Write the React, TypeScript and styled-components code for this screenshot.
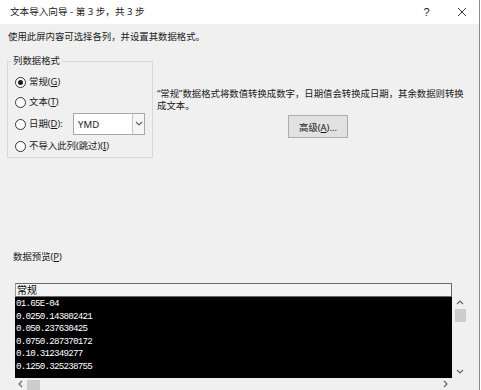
import styled, { createGlobalStyle } from 'styled-components'

const GlobalStyle = createGlobalStyle`
  html, body {
    margin: 0;
    padding: 0;
    background: #fff;
  }
  body {
    font-family: "Noto Sans", "Noto Sans CJK SC", sans-serif;
    color: #1a1a1a;
  }
  * {
    box-sizing: border-box;
  }
`

const Win = styled.div`
  width: 480px;
  height: 390px;
  overflow: hidden;
  display: flex;
  flex-direction: column;
  background: #f0f0f0;
  border-right: 1px solid #8c8c8c;
`

const TitleBar = styled.div`
  flex: 0 0 24px;
  display: flex;
  align-items: center;
  background: #fff;
  padding-left: 10px;
  font-size: 9.6px;
`

const Title = styled.span`
  flex: 1;
  line-height: 14px;
`

const TitleBtn = styled.span`
  width: 35px;
  height: 24px;
  display: flex;
  align-items: center;
  justify-content: center;
  font-family: "Liberation Sans", sans-serif;
  font-size: 11px;
  color: #222;
`

const Body = styled.div`
  flex: 1;
  display: flex;
  flex-direction: column;
  padding-left: 7px;
  font-size: 9.4px;
`

const Intro = styled.div`
  margin: 6px 0 0 1px;
  line-height: 14px;
`

const OptionsRow = styled.div`
  display: flex;
  margin-top: 10px;
`

const Group = styled.fieldset`
  width: 146px;
  margin: 0;
  padding: 4px 7px 0 7px;
  border: 1px solid #d8d8d8;
  min-inline-size: 0;
  height: 104px;
`

const Legend = styled.legend`
  padding: 0 2px;
  margin-left: -4px;
  line-height: 14px;
`

const Option = styled.label<{ $tall?: boolean }>`
  display: flex;
  align-items: center;
  gap: 3px;
  height: ${p => (p.$tall ? 24 : 20)}px;
  white-space: nowrap;
`

const OptionText = styled.span`
  line-height: 14px;
`

const Radio = styled.span<{ $on?: boolean }>`
  width: 11px;
  height: 11px;
  flex: 0 0 11px;
  border-radius: 50%;
  border: 1px solid #333;
  background: #fff;
  display: flex;
  align-items: center;
  justify-content: center;
  &::after {
    content: '';
    width: 5px;
    height: 5px;
    border-radius: 50%;
    background: ${p => (p.$on ? '#1a1a1a' : 'transparent')};
  }
`

const Select = styled.div`
  margin-left: auto;
  width: 72px;
  height: 22px;
  display: flex;
  border: 1px solid #a8a8a8;
  background: #fff;
`

const SelectValue = styled.span`
  flex: 1;
  display: flex;
  align-items: center;
  padding-left: 4px;
  font-size: 9.6px;
`

const SelectBtn = styled.span`
  width: 12px;
  display: flex;
  align-items: center;
  justify-content: center;
  border-left: 1px solid #c4c4c4;
  background: #f6f6f6;
`

const Side = styled.div`
  flex: 1;
  margin-left: 4px;
  padding-top: 34px;
  display: flex;
  flex-direction: column;
  align-items: center;
`

const Note = styled.div`
  align-self: stretch;
  line-height: 11.5px;
  white-space: nowrap;
`

const Button = styled.button`
  margin-top: 4px;
  width: 60px;
  height: 23px;
  padding: 0;
  border: 1px solid #adadad;
  background: #e1e1e1;
  font-family: inherit;
  font-size: 9.4px;
  color: #1a1a1a;
`

const PreviewLabel = styled.div`
  margin: 92px 0 0 6px;
  line-height: 13px;
`

const Preview = styled.div`
  margin: 20px 0 0 8px;
  width: 453px;
  display: grid;
  grid-template-columns: 437px 16px;
  grid-template-rows: 14px 81px 12px;
`

const Header = styled.div`
  grid-column: 1;
  grid-row: 1;
  border: 1px solid #6a6a6a;
  border-left-color: #9a9a9a;
  background: #f4f4f4;
  padding-left: 1px;
  font-family: "Noto Sans CJK SC", sans-serif;
  font-size: 10px;
  line-height: 12px;
  color: #000;
`

const Data = styled.div`
  grid-column: 1;
  grid-row: 2;
  background: #000;
  color: #fff;
  padding: 1px 0 0 1px;
  font-family: "Liberation Mono", monospace;
  font-size: 9.2px;
  letter-spacing: -0.77px;
  line-height: 12.6px;
`

const VScroll = styled.div`
  grid-column: 2;
  grid-row: 2;
  display: flex;
  flex-direction: column;
  align-items: center;
  background: #f0f0f0;
`

const Arrow = styled.span`
  height: 12px;
  width: 12px;
  flex: 0 0 12px;
  display: flex;
  align-items: center;
  justify-content: center;
`

const VThumb = styled.span`
  width: 11px;
  height: 13px;
  background: #cdcdcd;
`

const HScroll = styled.div`
  grid-column: 1;
  grid-row: 3;
  display: flex;
  align-items: stretch;
  background: #f0f0f0;
`

const HThumb = styled.span`
  width: 13px;
  margin-top: 2px;
  background: #cdcdcd;
`

const Fill = styled.span`
  flex: 1;
`

const Chevron = ({ dir }: { dir: 'up' | 'down' | 'left' | 'right' }) => {
  const pts = {
    up: '1,5 4,2 7,5',
    down: '1,2 4,5 7,2',
    left: '5,1 2,4 5,7',
    right: '2,1 5,4 2,7',
  }[dir]
  return (
    <svg width="8" height="8" viewBox="0 0 8 8">
      <polyline points={pts} fill="none" stroke="#606060" strokeWidth="1.1" />
    </svg>
  )
}

const rows = [
  '01.65E-04',
  '0.0250.143802421',
  '0.050.237630425',
  '0.0750.287370172',
  '0.10.312349277',
  '0.1250.325238755',
]

export default function App() {
  return (
    <>
      <GlobalStyle />
      <Win>
        <TitleBar>
          <Title>文本导入向导 - 第 3 步，共 3 步</Title>
          <TitleBtn>?</TitleBtn>
          <TitleBtn>
            <svg width="10" height="10" viewBox="0 0 10 10">
              <path d="M1 1L9 9M9 1L1 9" stroke="#333" strokeWidth="1" />
            </svg>
          </TitleBtn>
        </TitleBar>
        <Body>
          <Intro>使用此屏内容可选择各列，并设置其数据格式。</Intro>
          <OptionsRow>
            <Group>
              <Legend>列数据格式</Legend>
              <Option>
                <Radio $on />
                <OptionText>
                  常规(<u>G</u>)
                </OptionText>
              </Option>
              <Option>
                <Radio />
                <OptionText>
                  文本(<u>T</u>)
                </OptionText>
              </Option>
              <Option $tall>
                <Radio />
                <OptionText>
                  日期(<u>D</u>):
                </OptionText>
                <Select>
                  <SelectValue>YMD</SelectValue>
                  <SelectBtn>
                    <Chevron dir="down" />
                  </SelectBtn>
                </Select>
              </Option>
              <Option>
                <Radio />
                <OptionText>
                  不导入此列(跳过)(<u>I</u>)
                </OptionText>
              </Option>
            </Group>
            <Side>
              <Note>
                “常规”数据格式将数值转换成数字，日期值会转换成日期，其余数据则转换
                <br />
                成文本。
              </Note>
              <Button>
                高级(<u>A</u>)...
              </Button>
            </Side>
          </OptionsRow>
          <PreviewLabel>
            数据预览(<u>P</u>)
          </PreviewLabel>
          <Preview>
            <Header>常规</Header>
            <Data>
              {rows.map((r, i) => (
                <div key={i}>{r}</div>
              ))}
            </Data>
            <VScroll>
              <Arrow>
                <Chevron dir="up" />
              </Arrow>
              <VThumb />
              <Fill />
              <Arrow>
                <Chevron dir="down" />
              </Arrow>
            </VScroll>
            <HScroll>
              <Arrow>
                <Chevron dir="left" />
              </Arrow>
              <HThumb />
              <Fill />
              <Arrow>
                <Chevron dir="right" />
              </Arrow>
            </HScroll>
          </Preview>
        </Body>
      </Win>
    </>
  )
}
